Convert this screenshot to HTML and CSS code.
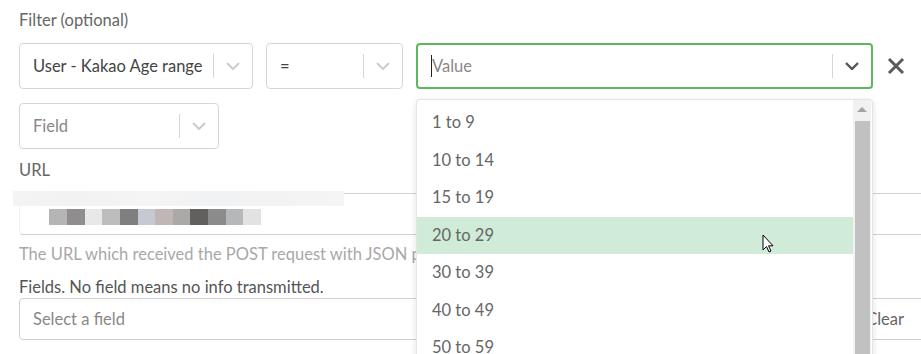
FILE: index.html
```html
<!DOCTYPE html>
<html lang="en">
<head>
    <meta charset="UTF-8">
    <meta name="viewport" content="width=device-width, initial-scale=1.0">
    <title>Webhook filter</title>
    <link rel="stylesheet" href="styles.css">
</head>
<body>
    <div class="page">
        <div class="label filter-label">Filter (optional)</div>

        <div class="filter-row">
            <div class="select select-field">
                <span class="select-text">User - Kakao Age range</span>
                <span class="sep"></span>
                <svg class="chev" viewBox="0 0 14 8"><path d="M1 1l6 6 6-6" /></svg>
            </div>
            <div class="select select-op">
                <span class="select-text">=</span>
                <span class="sep"></span>
                <svg class="chev" viewBox="0 0 14 8"><path d="M1 1l6 6 6-6" /></svg>
            </div>
            <div class="value-wrap">
                <div class="select select-value">
                    <span class="caret"></span>
                    <span class="select-text placeholder">Value</span>
                    <span class="sep"></span>
                    <svg class="chev dark" viewBox="0 0 14 8"><path d="M1 1l6 6 6-6" /></svg>
                </div>
                <div class="menu">
                    <ul class="options">
                        <li>1 to 9</li>
                        <li>10 to 14</li>
                        <li>15 to 19</li>
                        <li class="active">20 to 29</li>
                        <li>30 to 39</li>
                        <li>40 to 49</li>
                        <li>50 to 59</li>
                    </ul>
                    <div class="scrollbar">
                        <div class="scroll-up"></div>
                        <div class="scroll-thumb"></div>
                    </div>
                    <svg class="pointer" viewBox="0 0 12 19"><path d="M1 1v15l3.5-3.5 2.5 5.5 2-1-2.5-5.2H11z" /></svg>
                </div>
            </div>
            <svg class="remove" viewBox="0 0 20 20"><path d="M3 3l14 14M17 3L3 17" /></svg>
        </div>

        <div class="select select-small">
            <span class="select-text placeholder">Field</span>
            <span class="sep"></span>
            <svg class="chev" viewBox="0 0 14 8"><path d="M1 1l6 6 6-6" /></svg>
        </div>

        <div class="label url-label">URL</div>
        <div class="url-box">
            <div class="blur-top"></div>
            <div class="blur-text"></div>
        </div>
        <div class="help">The URL which received the POST request with JSON payload.</div>

        <div class="label fields-label">Fields. No field means no info transmitted.</div>
        <div class="multi">
            <span class="placeholder">Select a field</span>
            <span class="clear">Clear</span>
        </div>
    </div>
</body>
</html>
```

FILE: styles.css
```css
body {
    margin: 0;
    padding: 0;
    background: #ffffff;
    font-family: "Source Sans Pro", Lato, "Liberation Sans", sans-serif;
    font-size: 16.5px;
    color: #555555;
    overflow: hidden;
}
.page {
    width: 960px;
    height: 354px;
    padding: 9px 0 0 19px;
}
.label {
    color: #666666;
    line-height: 22px;
}
.filter-row {
    display: flex;
    align-items: center;
    margin-top: 12px;
}
.select {
    box-sizing: border-box;
    height: 46px;
    border: 1px solid #d6d6d6;
    border-radius: 4px;
    display: flex;
    align-items: center;
    padding: 0 12px 0 13px;
    background: #ffffff;
}
.select-text {
    flex: 1;
    color: #444444;
    white-space: nowrap;
}
.placeholder {
    color: #888888;
}
.sep {
    width: 1px;
    height: 24px;
    background: #d6d6d6;
    margin: 0 12px 0 10px;
}
.chev {
    width: 14px;
    height: 8px;
    fill: none;
    stroke: #cccccc;
    stroke-width: 2;
}
.chev.dark {
    stroke: #555555;
    stroke-width: 2.4;
}
.select-field {
    width: 234px;
}
.select-op {
    width: 137px;
    margin-left: 13px;
}
.value-wrap {
    position: relative;
    margin-left: 13px;
}
.select-value {
    width: 457px;
    border: 2px solid #5cb85c;
    padding-left: 13px;
}
.caret {
    width: 1px;
    height: 22px;
    background: #222222;
}
.remove {
    width: 20px;
    height: 20px;
    margin-left: 13px;
    fill: none;
    stroke: #5a5a5a;
    stroke-width: 3;
}
.menu {
    position: absolute;
    top: 56px;
    left: 0;
    width: 457px;
    height: 270px;
    background: #ffffff;
    border: 1px solid #e4e4e4;
    border-radius: 4px;
    box-sizing: border-box;
    box-shadow: 0 2px 6px rgba(0, 0, 0, 0.12);
    display: flex;
    z-index: 5;
}
.options {
    flex: 1;
    list-style: none;
    margin: 0;
    padding: 4px 0 0 0;
}
.options li {
    height: 37.5px;
    line-height: 37.5px;
    padding-left: 15px;
    color: #666666;
}
.options li.active {
    background: #d0ecd8;
}
.scrollbar {
    width: 18px;
    margin-right: 1px;
    background: #f1f1f1;
    display: flex;
    flex-direction: column;
    align-items: center;
}
.scroll-up {
    margin-top: 7px;
    width: 0;
    height: 0;
    border-left: 5px solid transparent;
    border-right: 5px solid transparent;
    border-bottom: 5px solid #a3a3a3;
}
.scroll-thumb {
    margin-top: 9px;
    width: 15px;
    flex: 1;
    background: #c1c1c1;
}
.pointer {
    position: absolute;
    left: 345px;
    top: 134px;
    width: 12px;
    height: 19px;
    fill: #ffffff;
    stroke: #000000;
    stroke-width: 1;
}
.select-small {
    width: 200px;
    margin-top: 14px;
}
.url-label {
    margin-top: 10px;
}
.url-box {
    position: relative;
    box-sizing: border-box;
    height: 42px;
    margin-top: 12px;
    border: 1px solid #d0d0d0;
    border-left-color: #f2f2f2;
    border-radius: 4px;
}
.blur-top {
    position: absolute;
    left: -7px;
    top: -3px;
    width: 331px;
    height: 15px;
    background: linear-gradient(90deg, #f4f4f4 0, #f2f2f2 60px, #f5f5f5 140px, #f1f2f4 200px, #f3f3f3 260px, #f5f5f5 331px);
}
.blur-text {
    position: absolute;
    left: 29px;
    top: 15px;
    width: 212px;
    height: 16px;
    background: linear-gradient(90deg,
        #b5b5b5 0, #b5b5b5 18px,
        #8f8d8d 18px, #8f8d8d 36px,
        #e8e8e8 36px, #e8e8e8 53px,
        #bdbdbd 53px, #bdbdbd 71px,
        #7f7f7f 71px, #7f7f7f 89px,
        #c5c9d1 89px, #c5c9d1 106px,
        #c0b6b3 106px, #c0b6b3 124px,
        #aaa9a7 124px, #aaa9a7 141px,
        #625f5f 141px, #625f5f 159px,
        #8a8b8a 159px, #8a8b8a 177px,
        #b5b8b9 177px, #b5b8b9 194px,
        #e2e2e2 194px, #e2e2e2 212px);
}
.help {
    color: #a8a8a8;
    line-height: 22px;
    margin-top: 8px;
}
.fields-label {
    color: #555555;
    margin-top: 11px;
}
.multi {
    box-sizing: border-box;
    height: 42px;
    border: 1px solid #d0d0d0;
    border-radius: 4px;
    display: flex;
    align-items: center;
    padding: 0 0 0 13px;
}
.multi .placeholder {
    flex: 1;
}
.clear {
    color: #666666;
    margin-right: 74px;
}
```
